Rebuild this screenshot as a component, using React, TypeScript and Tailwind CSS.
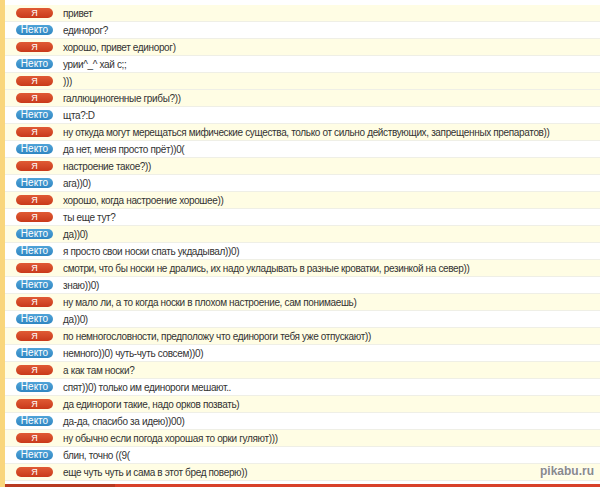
const rows: [0 | 1, string][] = [
  [0, "привет"],
  [1, "единорог?"],
  [0, "хорошо, привет единорог)"],
  [1, "урии^_^ хай с;;"],
  [0, ")))"],
  [0, "галлюциногенные грибы?))"],
  [1, "щта?:D"],
  [0, "ну откуда могут мерещаться мифические существа, только от сильно действующих, запрещенных препаратов))"],
  [1, "да нет, меня просто прёт))0("],
  [0, "настроение такое?))"],
  [1, "ага))0)"],
  [0, "хорошо, когда настроение хорошее))"],
  [0, "ты еще тут?"],
  [1, "да))0)"],
  [1, "я просто свои носки спать укдадывал))0)"],
  [0, "смотри, что бы носки не дрались, их надо укладывать в разные кроватки, резинкой на север))"],
  [1, "знаю))0)"],
  [0, "ну мало ли, а то когда носки в плохом настроение, сам понимаешь)"],
  [1, "да))0)"],
  [0, "по немногословности, предположу что единороги тебя уже отпускают))"],
  [1, "немного))0) чуть-чуть совсем))0)"],
  [0, "а как там носки?"],
  [1, "спят))0) только им единороги мешают.."],
  [0, "да единороги такие, надо орков позвать)"],
  [1, "да-да, спасибо за идею))00)"],
  [0, "ну обычно если погода хорошая то орки гуляют)))"],
  [1, "блин, точно ((9("],
  [0, "еще чуть чуть и сама в этот бред поверю))"],
];

function Badge({ who }: { who: 0 | 1 }) {
  if (who === 0) {
    return (
      <span className="flex h-[10px] w-[37px] shrink-0 items-center justify-center rounded-[5px] bg-gradient-to-b from-[#e05a34] to-[#c9391a] text-[9px] leading-none text-white">
        Я
      </span>
    );
  }
  return (
    <span className="flex h-[10px] w-[37px] shrink-0 items-center justify-center rounded-[5px] bg-gradient-to-b from-[#4fa3d8] to-[#2f86c2] text-[10px] leading-none text-white">
      Некто
    </span>
  );
}

export default function App() {
  return (
    <div className="relative flex h-[487px] w-[600px] overflow-hidden bg-white font-['Liberation_Sans',Arial,sans-serif]">
      <div className="w-[5px] shrink-0 bg-[#f9d67c]" />
      <div className="flex min-w-0 flex-1 flex-col">
        <div className="flex flex-1 flex-col pt-[5px]">
          {rows.map(([who, text], i) => {
            const yellow = i < 5 ? i % 2 === 0 : i % 2 === 1;
            return (
              <div
                key={i}
                className={`flex h-[17px] items-center border-b border-[#efefe6] ${yellow ? "bg-[#fffde4]" : "bg-white"}`}
              >
                <div className="ml-[11px]">
                  <Badge who={who} />
                </div>
                <span className="ml-[10px] whitespace-nowrap text-[10px] tracking-[-0.35px] text-[#333333]">{text}</span>
              </div>
            );
          })}
        </div>
        <div className="flex h-[3px]">
          <div className="w-[110px] bg-[#b83a22]" />
          <div className="flex-1 bg-[#d8412a]" />
        </div>
      </div>
      <span className="absolute bottom-[7px] right-[6px] text-[12px] font-bold text-[#8a8a8a] [text-shadow:0_0_2px_#fff,0_0_2px_#fff]">
        pikabu.ru
      </span>
    </div>
  );
}
